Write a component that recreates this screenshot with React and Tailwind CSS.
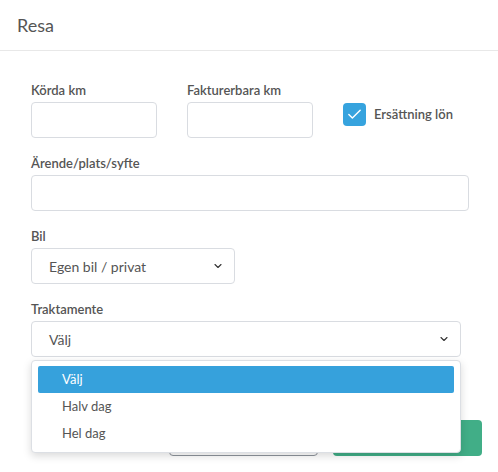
import { Check, ChevronDown } from 'lucide-react';

const Field = ({ label, children, className = '' }) => (
  <div className={`mb-[17px] ${className}`}>
    <div className="mb-1 text-[13px] leading-4 font-semibold text-[#555]">{label}</div>
    {children}
  </div>
);

const Select = ({ value, className = '' }) => (
  <div
    className={`flex h-9 items-center justify-between rounded border border-[#d9dce1] bg-white pl-[17px] pr-[10px] text-[14px] text-[#555] ${className}`}
  >
    <span>{value}</span>
    <ChevronDown size={12} strokeWidth={2.2} className="text-[#333]" />
  </div>
);

const options = ['Välj', 'Halv dag', 'Hel dag'];

const App = () => {
  return (
    <div className="h-[472px] w-[498px] overflow-hidden bg-white font-['Lato',sans-serif]">
      <div className="flex h-[51px] items-center border-b border-[#e8e8e8] px-[17px]">
        <h2 className="text-[18px] text-[#555]">Resa</h2>
      </div>

      <div className="pl-[31px] pr-[29px] pt-[31px]">
        <div className="flex gap-[30px]">
          <Field label="Körda km" className="w-[126px]">
            <div className="h-9 rounded border border-[#d9dce1] bg-white" />
          </Field>
          <Field label="Fakturerbara km" className="w-[126px]">
            <div className="h-9 rounded border border-[#d9dce1] bg-white" />
          </Field>
          <div className="flex items-center gap-2 pt-[21px] self-start">
            <div className="flex h-[23px] w-[23px] items-center justify-center rounded-[4px] bg-[#36a3de]">
              <Check size={17} strokeWidth={2} className="text-white" />
            </div>
            <span className="text-[13px] font-semibold text-[#555]">Ersättning lön</span>
          </div>
        </div>

        <Field label="Ärende/plats/syfte">
          <div className="h-9 rounded border border-[#d9dce1] bg-white" />
        </Field>

        <Field label="Bil">
          <Select value="Egen bil / privat" className="w-[204px]" />
        </Field>

        <div className="relative w-[430px]">
          <div className="mb-1 text-[13px] leading-4 font-semibold text-[#555]">Traktamente</div>
          <Select value="Välj" />

          <div className="absolute left-0 right-0 top-[calc(100%+3px)] z-10 rounded border border-[#dcdfe4] bg-white px-[6px] py-[5px] shadow-[0_3px_8px_rgba(0,0,0,0.15)]">
            {options.map((opt, i) => (
              <div
                key={opt}
                className={`flex h-[27px] items-center rounded-[2px] pl-6 text-[13px] ${
                  i === 0 ? 'bg-[#36a1dc] text-white' : 'text-[#555]'
                }`}
              >
                {opt}
              </div>
            ))}
          </div>
        </div>
      </div>

      <div className="mt-[63px] flex justify-end gap-[15px] pr-4">
        <button className="h-9 w-[149px] rounded border border-[#8e949c] bg-white text-[14px] text-[#555]">
          Avbryt
        </button>
        <button className="h-9 w-[149px] rounded bg-[#41ae87] text-[14px] font-semibold text-white">
          Spara
        </button>
      </div>
    </div>
  );
};

export default App;
